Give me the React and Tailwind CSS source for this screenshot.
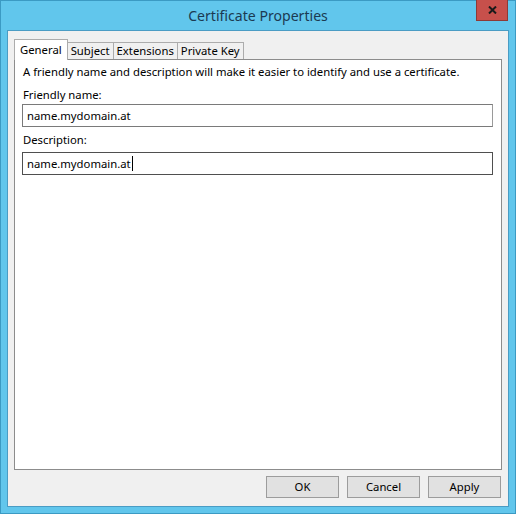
import React from 'react';

const font = { fontFamily: '"Noto Sans", "Open Sans", sans-serif' };

const Tab = ({ label, active }) =>
  active ? (
    <div className="relative z-10 -mb-px h-[21px] px-[5px] pt-[2px] bg-white border border-b-0 border-[#acacac] text-[11.3px] leading-[16px] text-black">
      {label}
    </div>
  ) : (
    <div className="mt-[3px] -ml-px h-[17px] px-[3px] bg-[#f0f0f0] border border-b-0 border-[#acacac] text-[11.3px] leading-[16px] text-black">
      {label}
    </div>
  );

const App = () => {
  return (
    <div style={font} className="w-[516px] h-[514px] flex flex-col bg-[#61c6ec] border border-[#3b9ac3]">
      {/* title bar */}
      <div className="relative h-[29px] flex items-center justify-center">
        <span className="text-[14.1px] text-[#1b3a52]">Certificate Properties</span>
        <div className="absolute top-[-1px] right-[7px] w-[32px] h-[21px] bg-[#c7504b] border border-[#8e3a36] border-t-0 flex items-center justify-center">
          <svg width="9" height="8" viewBox="0 0 9 8">
            <path d="M1 0.5 L8 7.5 M8 0.5 L1 7.5" stroke="#1a1a1a" strokeWidth="2" />
          </svg>
        </div>
      </div>

      {/* client */}
      <div className="flex-1 mx-[6px] mb-[6px] bg-[#f0f0f0] border border-[#4a9cc4] flex flex-col px-[6px] pt-[8px]">
        <div className="flex items-start">
          <Tab label="General" active />
          <Tab label="Subject" />
          <Tab label="Extensions" />
          <Tab label="Private Key" />
        </div>

        <div className="h-[411px] bg-white border border-[#8c8c8c] flex flex-col pl-[8px] pr-[8px] pt-[4px] text-[11.3px] leading-[16px] text-black">
          <p>A friendly name and description will make it easier to identify and use a certificate.</p>
          <p className="mt-[7px]">Friendly name:</p>
          <div className="mt-[1px] -ml-px h-[23px] bg-white border border-[#7a7a7a] border-r-[#9a9a9a] flex items-center pl-[4px]">
            name.mydomain.at
          </div>
          <p className="mt-[5px]">Description:</p>
          <div className="mt-[4px] -ml-px h-[23px] bg-white border border-[#4f4f4f] flex items-center pl-[4px]">
            name.mydomain.at
            <span className="inline-block w-px h-[15px] bg-black ml-[1px]" />
          </div>
        </div>

        <div className="flex justify-end gap-[8px] mt-[6px] pr-px">
          {['OK', 'Cancel', 'Apply'].map((b) => (
            <button
              key={b}
              className="w-[73px] h-[22px] bg-[#e1e1e1] border border-[#9c9c9c] text-[11.3px] text-black flex items-center justify-center"
            >
              {b}
            </button>
          ))}
        </div>
      </div>
    </div>
  );
};

export default App;
